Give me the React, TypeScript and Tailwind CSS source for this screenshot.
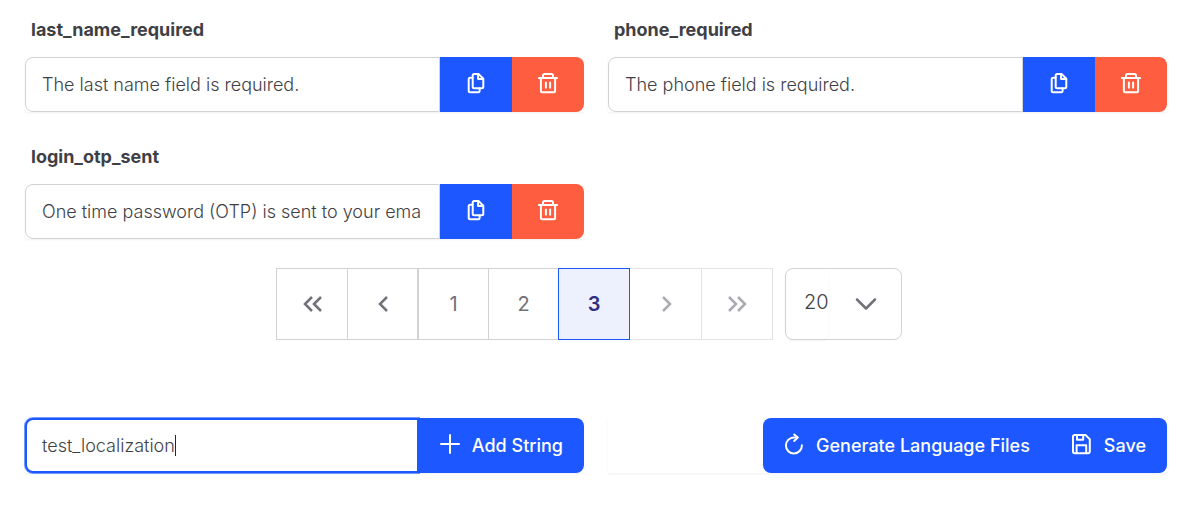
import { useState } from "react";
import type { ReactNode } from "react";

const iconClass = "mb-[3px] size-5 shrink-0 overflow-visible fill-none stroke-current stroke-2";

function CopyIcon() {
  return (
    <svg viewBox="2 2 20 20" className={iconClass} strokeLinejoin="round" strokeLinecap="round" aria-hidden="true">
      <path d="M10.200 2.900H14.500L19.300 7.700V15.800a1.500 1.500 0 0 1-1.500 1.500h-7.600a1.500 1.500 0 0 1-1.500-1.500V4.400a1.500 1.500 0 0 1 1.500-1.500Z" />
      <path d="M14.100 3v5.100h5" />
      <path d="M8.500 6.800H6.200a1.500 1.500 0 0 0-1.500 1.500V19.700a1.500 1.500 0 0 0 1.500 1.500h7.900a1.500 1.500 0 0 0 1.500-1.500V17.500" />
    </svg>
  );
}

function TrashIcon() {
  return (
    <svg viewBox="2 2 20 20" className={iconClass} strokeLinejoin="round" strokeLinecap="round" aria-hidden="true">
      <path d="M2.900 6.900h18.200M7 6.500V4.400a1.500 1.500 0 0 1 1.500-1.500h7a1.500 1.500 0 0 1 1.500 1.500v2.100" />
      <path d="M4.900 6.900v12.800a1.500 1.500 0 0 0 1.500 1.500h11.200a1.500 1.500 0 0 0 1.500-1.500v-12.800M9.900 11.500v5.300M14.100 11.500v5.300" />
    </svg>
  );
}

function PlusIcon() {
  return (
    <svg viewBox="2 2 20 20" className={iconClass} strokeLinecap="round" aria-hidden="true">
      <path d="M12 3v18M3 12h18" />
    </svg>
  );
}

function RefreshIcon() {
  return (
    <svg viewBox="2 2 20 20" className={iconClass} strokeLinejoin="round" strokeLinecap="round" aria-hidden="true">
      <path d="M19.900 13.300A8 8 0 1 1 11.900 5.500h3.600" />
      <path d="M12.200 2.500 15.700 5.600l-3.500 3.400" />
    </svg>
  );
}

function SaveIcon() {
  return (
    <svg viewBox="2 2 20 20" className={iconClass} strokeLinejoin="round" strokeLinecap="round" aria-hidden="true">
      <path d="M4.600 2.900h10.800L19.800 7.300V19.600a1.600 1.600 0 0 1-1.600 1.600H4.600A1.600 1.600 0 0 1 3 19.600V4.500a1.600 1.600 0 0 1 1.600-1.600Z" />
      <path d="M7 3v4.700h6.200V3M6.600 21v-7.800h9.600V21" />
    </svg>
  );
}

const groupClass = "flex h-[55px] shadow-[0_1px_2px_rgba(18,18,23,0.06)]";

function StringField({ name, text }: { name: string; text: string }) {
  return (
    <div className="flex flex-col gap-[15px]">
      <label htmlFor={name} className="px-1.5 text-lg leading-6 font-bold">
        {name}
      </label>
      <div className={groupClass}>
        <input
          id={name}
          defaultValue={text}
          className="min-w-0 flex-1 rounded-l-lg border border-[#d1d1d6] bg-white pr-[18px] pl-4 text-lg font-light outline-none"
        />
        <button type="button" aria-label={`Copy ${name}`} className="flex w-[72px] items-center justify-center bg-[#1c57ff] text-white">
          <CopyIcon />
        </button>
        <button type="button" aria-label={`Delete ${name}`} className="flex w-[72px] items-center justify-center rounded-r-lg bg-[#ff5d3f] text-white">
          <TrashIcon />
        </button>
      </div>
    </div>
  );
}

function Chevrons({ d }: { d: string }) {
  return (
    <svg viewBox="0 0 24 24" className="size-6 fill-none stroke-current stroke-[2.5]" aria-hidden="true">
      <path d={d} />
    </svg>
  );
}

function PageButton({ label, className, disabled, children }: { label: string; className: string; disabled?: boolean; children: ReactNode }) {
  return (
    <button type="button" aria-label={label} disabled={disabled} className={`flex h-[72px] items-center justify-center text-xl ${className}`}>
      {children}
    </button>
  );
}

export default function App() {
  const [key, setKey] = useState("test_localization");
  const solid = "flex items-center gap-3 bg-[#1c57ff] px-[21px] text-lg font-medium text-white";
  return (
    <main className="bg-white pt-[18px] pr-4 pb-8 pl-[25px] font-['Inter',sans-serif] text-[#3f3f46]">
      <div className="grid grid-cols-2 gap-x-6 gap-y-[33px]">
        <StringField name="last_name_required" text="The last name field is required." />
        <StringField name="phone_required" text="The phone field is required." />
        <StringField name="login_otp_sent" text="One time password (OTP) is sent to your email." />
      </div>

      <nav aria-label="Pagination" className="mt-[29px] mr-3.5 flex justify-center gap-3 text-[#71717a]">
        <div className="flex">
          <PageButton label="First page" className="w-[71px] border-y border-l border-[#d1d1d6]">
            <Chevrons d="M12 5l-7 7 7 7M21 5l-7 7 7 7" />
          </PageButton>
          <PageButton label="Previous page" className="w-[71px] border border-[#d1d1d6]">
            <Chevrons d="M16 5l-7 7 7 7" />
          </PageButton>
          <PageButton label="Page 1" className="w-[70px] border-y border-l border-[#d1d1d6]">1</PageButton>
          <PageButton label="Page 2" className="w-[70px] border-y border-l border-[#d1d1d6]">2</PageButton>
          <PageButton label="Page 3" className="w-[72px] border border-[#1c57ff] bg-[#edf1fe] font-semibold text-[#312e81]">3</PageButton>
          <PageButton label="Next page" disabled className="w-[71px] border-y border-[#e3e3e6] text-[#aaaab0]">
            <Chevrons d="M9 5l7 7-7 7" />
          </PageButton>
          <PageButton label="Last page" disabled className="w-[72px] border border-[#e3e3e6] text-[#aaaab0]">
            <Chevrons d="M4 5l7 7-7 7M13 5l7 7-7 7" />
          </PageButton>
        </div>
        <div className="relative">
          <select
            aria-label="Rows per page"
            defaultValue="20"
            className="h-[72px] w-[117px] appearance-none rounded-lg border border-[#d1d1d6] bg-white pb-1 pl-[18px] text-xl font-light text-[#3f3f46]"
          >
            <option>10</option>
            <option>20</option>
            <option>50</option>
          </select>
          <span className="pointer-events-none absolute inset-y-0 left-0 w-11 rounded-lg shadow-[0_1px_2px_rgba(18,18,23,0.05)]" />
          <svg viewBox="0 0 24 24" className="pointer-events-none absolute top-6 right-6 size-6 fill-none stroke-current stroke-[2.5]" strokeLinecap="round" strokeLinejoin="round" aria-hidden="true">
            <path d="M3 7.500l9 9 9-9" />
          </svg>
        </div>
      </nav>

      <div className="mt-[78px] grid grid-cols-2 gap-x-6">
        <div className={groupClass}>
          <div className="relative flex min-w-0 flex-1">
            <input
              autoFocus
              aria-label="New string key"
              value={key}
              onChange={(event) => setKey(event.target.value)}
              className="w-full rounded-l-lg border-2 border-[#1c57ff] bg-white px-[15px] text-lg font-light caret-transparent ring-1 ring-[#1c57ff]/60 outline-none"
            />
            <div aria-hidden="true" className="pointer-events-none absolute inset-y-0 left-[17px] flex items-center text-lg font-light">
              <span className="invisible whitespace-pre">{key}</span>
              <span className="h-[21px] w-px bg-[#27272a]" />
            </div>
          </div>
          <button type="button" className={`${solid} rounded-r-lg`}>
            <PlusIcon />
            Add String
          </button>
        </div>
        <div className={`${groupClass} justify-end`}>
          <button type="button" className={`${solid} rounded-l-lg`}>
            <RefreshIcon />
            Generate Language Files
          </button>
          <button type="button" className={`${solid} rounded-r-lg`}>
            <SaveIcon />
            Save
          </button>
        </div>
      </div>
    </main>
  );
}
